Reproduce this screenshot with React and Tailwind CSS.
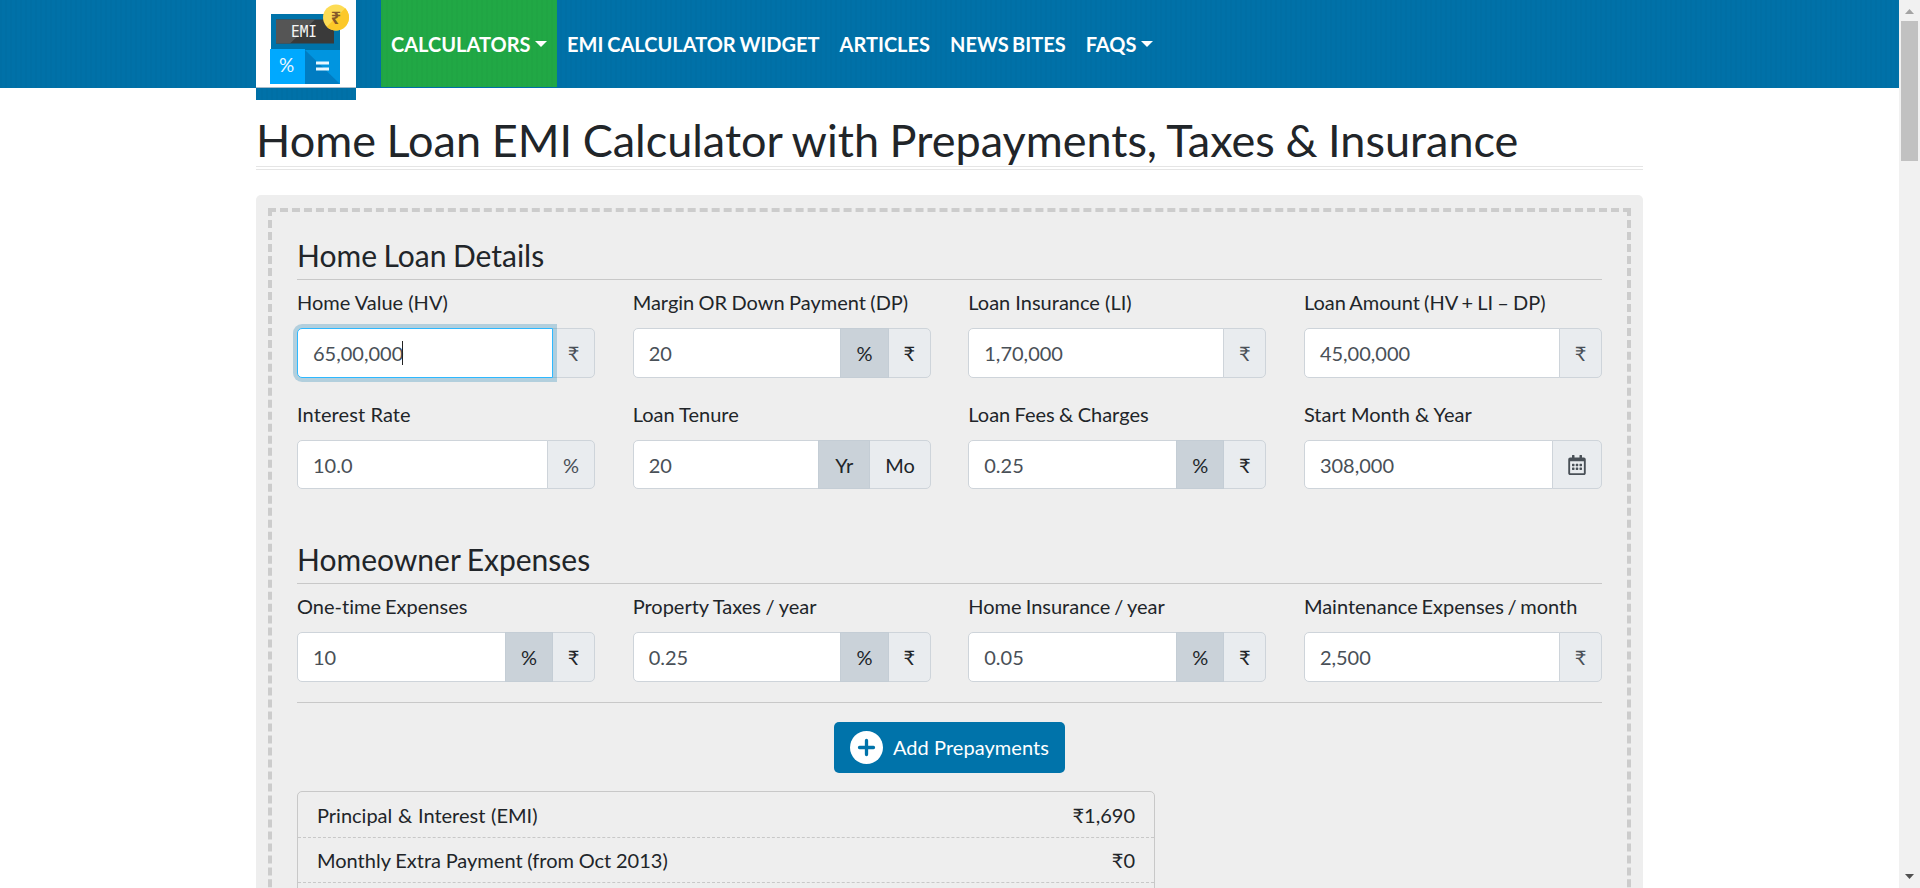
import { FaRegCalendarAlt } from "react-icons/fa";

const Caret = () => (
  <span className="ml-[5px] inline-block h-0 w-0 border-x-[6px] border-t-[6px] border-x-transparent border-t-white align-[5px]" />
);

const Logo = () => (
  <svg width="100" height="87" viewBox="0 0 100 87">
    <rect x="15" y="14" width="69" height="36" fill="#0073aa" />
    <rect x="20" y="19.500" width="58" height="24" fill="#3a3a3a" />
    <path d="M20 19.5h39L34 43.5H20z" fill="#555" />
    <rect x="14" y="49" width="35" height="35" fill="#00a9ff" />
    <rect x="49" y="50" width="35" height="34" fill="#0095e0" />
    <path d="M49 50l35 34H49z" fill="#007cc2" />
    <text x="48" y="36.500" fill="#f5f5f5" fontSize="15.500" textAnchor="middle" textLength="26" lengthAdjust="spacingAndGlyphs" fontFamily="DejaVu Sans Mono">EMI</text>
    <text x="30.500" y="72" fill="#e8f7ff" fontSize="19" textAnchor="middle" fontFamily="Lato">%</text>
    <rect x="60" y="61.500" width="13" height="3" fill="#e8f7ff" />
    <rect x="60" y="67.500" width="13" height="3" fill="#e8f7ff" />
    <circle cx="80" cy="17.500" r="13" fill="#fddc55" />
    <path d="M89.2 8.3A13 13 0 0 1 70.8 26.7z" fill="#fcc829" />
    <text x="80" y="24" fill="#85592a" fontSize="18" fontWeight="700" textAnchor="middle" fontFamily="Noto Sans">₹</text>
  </svg>
);

const widths = { "%": "w-[48.4px]", "₹": "w-[43px]", Yr: "w-[52.3px]", Mo: "w-[61.3px]", cal: "w-[50px]" };

function Field({ label, value, units, focused, short, spacing = "" }) {
  const toggle = units.length > 1;
  return (
    <div>
      <div className={`mb-[11px] h-[29px] leading-[28px] whitespace-nowrap ${spacing}`}>{label}</div>
      <div className={`flex ${short ? "h-[49px]" : "h-[50px]"}`}>
        <div
          className={
            "flex flex-1 items-center rounded-l-[5px] border bg-white pl-[15px] text-[#495057] " +
            (focused ? "relative z-10 border-[#2eb8ff] shadow-[0_0_0_4px_rgba(0,115,170,0.25)]" : "border-[#ced4da]")
          }
        >
          {value}
          {focused && <span className="-ml-px h-6 w-px bg-[#222]" />}
        </div>
        {units.map((u, i) => (
          <div
            key={u}
            className={
              "-ml-px flex items-center justify-center border " +
              widths[u] +
              (i === units.length - 1 ? " rounded-r-[5px]" : "") +
              (toggle ? " text-[#212529]" : " text-[#495057]") +
              (toggle && i === 0 ? " relative border-[#c4cdd5] bg-[#cad2d9]" : " border-[#ced4da] bg-[#e9ecef]")
            }
          >
            {u === "cal" ? <FaRegCalendarAlt className="h-5 w-[18px]" /> : u}
          </div>
        ))}
      </div>
    </div>
  );
}

const Heading = ({ children }) => (
  <h2 className="mb-2 h-[42px] border-b border-[#c8c8c8] text-[30px] leading-[34px] [word-spacing:-1.2px]">{children}</h2>
);

const Row = ({ children }) => <div className="grid grid-cols-4 gap-x-[37.5px]">{children}</div>;

const texture =
  "bg-[repeating-linear-gradient(90deg,rgba(0,0,0,0.02)_0px,rgba(0,0,0,0.02)_2px,transparent_2px,transparent_5px)]";

export default function App() {
  return (
    <div className="flex h-[888px] w-[1920px] overflow-hidden bg-white font-['Lato','Noto_Sans',sans-serif] text-[20px] text-[#212529] [font-variant-ligatures:no-common-ligatures]">
      <div className="h-full w-[1899px] overflow-hidden">
        <header className={`h-[88px] bg-[#0071a8] pl-[256px] ${texture}`}>
          <div className="flex">
            <div className={`h-[100px] w-[100px] shrink-0 bg-[#0071a8] ${texture}`}>
              <div className="h-[88px] border-b border-[#a8bccb] bg-white">
                <Logo />
              </div>
            </div>
            <nav className="ml-[25px] flex h-[87px] items-center font-bold whitespace-nowrap text-white">
              <a className={`flex h-full w-[176px] items-center bg-[#21a845] px-[10px] ${texture}`}>
                CALCULATORS
                <Caret />
              </a>
              <a className="px-[10px] [word-spacing:-1px]">EMI CALCULATOR WIDGET</a>
              <a className="px-[10px]">ARTICLES</a>
              <a className="px-[10px] [word-spacing:-1.5px]">NEWS BITES</a>
              <a className="flex items-center px-[10px]">
                FAQS
                <Caret />
              </a>
            </nav>
          </div>
        </header>
        <main className="mx-auto w-[1387px] pt-6">
          <h1 className="h-[58px] border-b-4 border-double border-[#e5e5e5] text-[45px] leading-[56px] whitespace-nowrap [word-spacing:-0.9px]">
            Home Loan EMI Calculator with Prepayments, Taxes &amp; Insurance
          </h1>
          <section className="mt-[25px] h-[1100px] rounded-[5px] bg-[#eee] px-3 pt-[13px]">
            <div className="h-[1075px] border-4 border-dashed border-[#ccc] px-[25px] pt-[26px]">
              <Heading>Home Loan Details</Heading>
              <Row>
                <Field label="Home Value (HV)" value="65,00,000" units={["₹"]} focused />
                <Field label="Margin OR Down Payment (DP)" value="20" units={["%", "₹"]} spacing="[word-spacing:-0.75px]" />
                <Field label="Loan Insurance (LI)" value="1,70,000" units={["₹"]} />
                <Field label="Loan Amount (HV + LI – DP)" value="45,00,000" units={["₹"]} spacing="[word-spacing:-1px]" />
              </Row>
              <div className="h-[22px]" />
              <Row>
                <Field short label="Interest Rate" value="10.0" units={["%"]} spacing="tracking-[0.1px]" />
                <Field short label="Loan Tenure" value="20" units={["Yr", "Mo"]} />
                <Field short label="Loan Fees & Charges" value="0.25" units={["%", "₹"]} spacing="[word-spacing:-0.8px]" />
                <Field short label="Start Month & Year" value="308,000" units={["cal"]} />
              </Row>
              <div className="h-[53px]" />
              <Heading>Homeowner Expenses</Heading>
              <Row>
                <Field label="One-time Expenses" value="10" units={["%", "₹"]} spacing="[word-spacing:-1px]" />
                <Field label="Property Taxes / year" value="0.25" units={["%", "₹"]} spacing="[word-spacing:-0.5px]" />
                <Field label="Home Insurance / year" value="0.05" units={["%", "₹"]} spacing="[word-spacing:-1px]" />
                <Field label="Maintenance Expenses / month" value="2,500" units={["₹"]} spacing="[word-spacing:-1.4px]" />
              </Row>
              <hr className="mt-5 border-t border-[#c8c8c8]" />
              <button className="mx-auto mt-[19px] flex h-[51px] w-[231px] items-center rounded-[5px] bg-[#0073aa] pl-4 whitespace-nowrap text-white">
                <svg width="33" height="33" viewBox="0 0 33 33" className="mr-[10px]">
                  <circle cx="16.500" cy="16.500" r="16.500" fill="#fff" />
                  <path d="M16.5 9.5v14M9.500 16.5h14" stroke="#0073aa" strokeWidth="3.300" strokeLinecap="round" />
                </svg>
                <span className="-mt-0.5 tracking-[0.05px]">Add Prepayments</span>
              </button>
              <div className="mt-[18px] h-[300px] w-[858px] rounded-[5px] border border-[#c8c8c8]">
                <div className="flex h-[46px] items-center justify-between border-b border-dashed border-[#c8c8c8] px-[19px]">
                  <span className="[word-spacing:0.6px]">Principal &amp; Interest (EMI)</span>
                  <span>₹1,690</span>
                </div>
                <div className="flex h-[45px] items-center justify-between border-b border-dashed border-[#c8c8c8] px-[19px]">
                  <span className="[word-spacing:-0.4px]">Monthly Extra Payment (from Oct 2013)</span>
                  <span>₹0</span>
                </div>
              </div>
            </div>
          </section>
        </main>
      </div>
      <aside className="flex h-full w-[21px] flex-col items-center bg-[#f1f1f1]">
        <svg width="21" height="21" viewBox="0 0 21 21">
          <path d="M6 14l4.5-5 4.500 5z" fill="#a3a3a3" />
        </svg>
        <div className="h-[140px] w-[17px] bg-[#c1c1c1]" />
        <div className="flex-1" />
        <svg width="21" height="21" viewBox="0 0 21 21">
          <path d="M6 7l4.500 5L15 7z" fill="#505050" />
        </svg>
      </aside>
    </div>
  );
}
